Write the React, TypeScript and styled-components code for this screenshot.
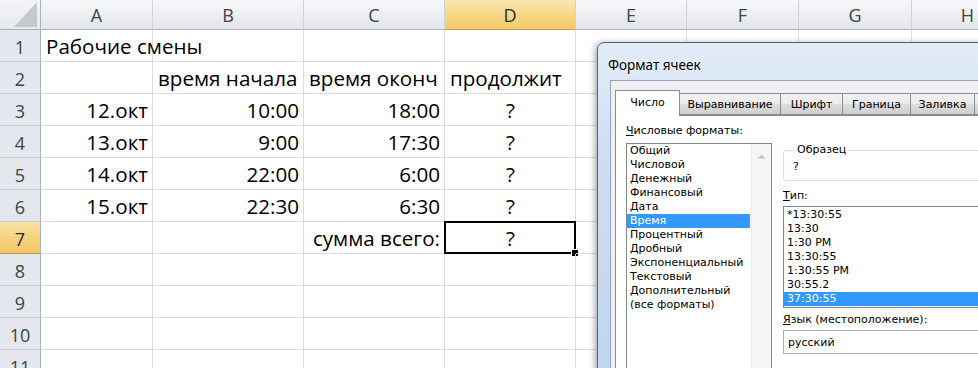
import React from "react";
import styled, { createGlobalStyle, css } from "styled-components";

const Global = createGlobalStyle`
  html, body { margin: 0; padding: 0; background: #fff; overflow: hidden; }
  body { width: 978px; height: 368px; }
  * { box-sizing: border-box; }
`;

const Page = styled.div`
  position: relative;
  width: 978px;
  height: 368px;
  overflow: hidden;
  font-family: "Open Sans", "Liberation Sans", sans-serif;
`;

const Sheet = styled.div`
  display: grid;
  grid-template-columns: 41px 112px 151px 141px 131px 111px 112px 113px 112px;
  grid-template-rows: 30px;
  grid-auto-rows: 32px;
`;

const Corner = styled.div`
  position: relative;
  background: linear-gradient(180deg, #f4f5f7, #e6e9ed);
  border-right: 1px solid #aab2bd;
  border-bottom: 1px solid #aab2bd;
  &::after {
    content: "";
    position: absolute;
    right: 3px;
    bottom: 2px;
    width: 23px;
    height: 25px;
    background: #c5c9ce;
    clip-path: polygon(100% 0, 100% 100%, 0 100%);
  }
`;

const ColHead = styled.div<{ $active?: boolean }>`
  display: flex;
  align-items: center;
  justify-content: center;
  font-size: 18px;
  color: #404346;
  background: linear-gradient(180deg, #f6f7f9 0%, #eceef1 55%, #e3e6ea 100%);
  border-right: 1px solid #cfd3d8;
  border-bottom: 1px solid #aab2bd;
  ${(p) =>
    p.$active &&
    css`
      background: linear-gradient(180deg, #fbe6b2 0%, #f8d88a 50%, #f3c968 100%);
      color: #2b2b2b;
      border-bottom-color: #c29b4e;
    `}
`;

const RowHead = styled.div<{ $active?: boolean }>`
  display: flex;
  align-items: center;
  justify-content: center;
  padding-top: 2px;
  font-size: 18px;
  color: #404346;
  background: #e4e8ee;
  border-right: 1px solid #aab2bd;
  border-bottom: 1px solid #c7ccd3;
  ${(p) =>
    p.$active &&
    css`
      background: linear-gradient(180deg, #fbe3a6 0%, #f6d27e 50%, #f2c666 100%);
      color: #2b2b2b;
      border-bottom-color: #c29b4e;
    `}
`;

const Cell = styled.div<{ $align?: "left" | "right" | "center"; $selected?: boolean }>`
  position: relative;
  display: flex;
  align-items: flex-end;
  padding: 0 4px 1px 5px;
  font-size: 20.6px;
  line-height: 27px;
  color: #000;
  white-space: nowrap;
  border-right: 1px solid #dadcdd;
  border-bottom: 1px solid #dadcdd;
  justify-content: ${(p) =>
    p.$align === "right" ? "flex-end" : p.$align === "center" ? "center" : "flex-start"};
  ${(p) =>
    p.$selected &&
    css`
      &::before {
        content: "";
        position: absolute;
        left: -1px;
        top: -1px;
        right: -1px;
        bottom: -1px;
        border: 2px solid #000;
        pointer-events: none;
      }
      &::after {
        content: "";
        position: absolute;
        right: -4px;
        bottom: -4px;
        width: 6px;
        height: 6px;
        background: #000;
        border: 1px solid #fff;
      }
    `}
`;

/* ---------- Dialog ---------- */

const Window = styled.div`
  position: absolute;
  left: 597px;
  top: 42px;
  width: 430px;
  height: 360px;
  border: 1px solid #51637c;
  border-radius: 7px 7px 0 0;
  background: linear-gradient(180deg, #e2ecf8 0%, #cfdff2 30%, #bed4ee 100%);
  box-shadow: -2px 1px 6px rgba(0, 0, 0, 0.35);
  padding-left: 12px;
  display: flex;
  flex-direction: column;
`;

const TitleBar = styled.div`
  height: 37px;
  display: flex;
  align-items: flex-end;
  padding-bottom: 6px;
  margin-left: -2px;
  font-family: "Noto Sans", "DejaVu Sans", sans-serif;
  font-size: 13.5px;
  color: #000;
  text-shadow: 0 0 6px #fff;
`;

const Client = styled.div`
  flex: 1;
  display: flex;
  flex-direction: column;
  background: #f0f0f0;
  border-left: 1px solid #8ea4c1;
  border-top: 1px solid #8ea4c1;
  padding: 9px 0 0 4px;
  font-family: "DejaVu Sans", "Liberation Sans", sans-serif;
  font-size: 11px;
  color: #000;
`;

const TabStrip = styled.div`
  display: flex;
  align-items: flex-start;
  height: 25px;
  position: relative;
  z-index: 1;
`;

const Tab = styled.div<{ $active?: boolean; $w: number }>`
  width: ${(p) => p.$w}px;
  flex: none;
  display: flex;
  align-items: center;
  justify-content: center;
  margin-top: 3px;
  height: 22px;
  border: 1px solid #898c95;
  border-left-width: 0;
  background: linear-gradient(180deg, #f2f2f2 0%, #ebebeb 50%, #dddddd 51%, #cfcfcf 100%);
  ${(p) =>
    p.$active &&
    css`
      margin-top: 0;
      height: 26px;
      border-left-width: 1px;
      border-bottom: none;
      background: #fff;
      padding-bottom: 2px;
    `}
`;

const Panel = styled.div`
  flex: 1;
  background: #fff;
  border: 1px solid #898c95;
  padding: 8px 10px;
  display: grid;
  grid-template-columns: 146px 1fr;
  column-gap: 11px;
  align-items: start;
`;

const Column = styled.div`
  display: flex;
  flex-direction: column;
`;

const Label = styled.div<{ $gap?: number }>`
  height: 14px;
  line-height: 14px;
  white-space: nowrap;
  margin-top: ${(p) => p.$gap ?? 0}px;
  u { text-decoration: underline; text-underline-offset: 1px; }
`;

const ListBox = styled.div<{ $h: number; $gap?: number }>`
  height: ${(p) => p.$h}px;
  margin-top: ${(p) => p.$gap ?? 0}px;
  border: 1px solid #828790;
  background: #fff;
  display: flex;
  overflow: hidden;
`;

const Items = styled.div<{ $pad?: number }>`
  flex: 1;
  padding: ${(p) => p.$pad ?? 0}px 1px 0 0;
`;

const Item = styled.div<{ $selected?: boolean }>`
  height: 14px;
  line-height: 14px;
  padding-left: 3px;
  white-space: nowrap;
  ${(p) =>
    p.$selected &&
    css`
      background: #3399ff;
      color: #fff;
    `}
`;

const ScrollBar = styled.div`
  width: 20px;
  flex: none;
  background: #f6f6f6;
  border-left: 1px solid #ececec;
  display: flex;
  justify-content: center;
  padding-top: 9px;
`;

const Group = styled.fieldset`
  margin: 19px 0 0 0;
  padding: 3px 10px 0 9px;
  height: 38px;
  border: 1px solid #d5dfe5;
  border-radius: 3px;
  min-width: 0;
  legend {
    padding: 0 2px;
    margin-left: 2px;
    line-height: 14px;
  }
`;

const Sample = styled.div`
  line-height: 14px;
`;

const Combo = styled.div`
  margin-top: 3px;
  height: 24px;
  border: 1px solid #abadb3;
  display: flex;
  align-items: center;
  padding-left: 4px;
`;

const cols = ["A", "B", "C", "D", "E", "F", "G", "H"];

type CellDef = { t?: string; a?: "left" | "right" | "center"; sel?: boolean };

const rows: CellDef[][] = [
  [{ t: "Рабочие смены" }],
  [{}, { t: "время начала" }, { t: "время оконч" }, { t: "продолжит" }],
  [{ t: "12.окт", a: "right" }, { t: "10:00", a: "right" }, { t: "18:00", a: "right" }, { t: "?", a: "center" }],
  [{ t: "13.окт", a: "right" }, { t: "9:00", a: "right" }, { t: "17:30", a: "right" }, { t: "?", a: "center" }],
  [{ t: "14.окт", a: "right" }, { t: "22:00", a: "right" }, { t: "6:00", a: "right" }, { t: "?", a: "center" }],
  [{ t: "15.окт", a: "right" }, { t: "22:30", a: "right" }, { t: "6:30", a: "right" }, { t: "?", a: "center" }],
  [{}, {}, { t: "сумма всего:", a: "right" }, { t: "?", a: "center", sel: true }],
  [],
  [],
  [],
  [],
];

const formats = [
  "Общий",
  "Числовой",
  "Денежный",
  "Финансовый",
  "Дата",
  "Время",
  "Процентный",
  "Дробный",
  "Экспоненциальный",
  "Текстовый",
  "Дополнительный",
  "(все форматы)",
];

const types = ["*13:30:55", "13:30", "1:30 PM", "13:30:55", "1:30:55 PM", "30:55.2", "37:30:55"];

const tabs: { t: string; w: number }[] = [
  { t: "Число", w: 65 },
  { t: "Выравнивание", w: 101 },
  { t: "Шрифт", w: 62 },
  { t: "Граница", w: 68 },
  { t: "Заливка", w: 64 },
  { t: "Защита", w: 64 },
];

export default function App() {
  return (
    <Page>
      <Global />
      <Sheet>
        <Corner />
        {cols.map((c) => (
          <ColHead key={c} $active={c === "D"}>
            {c}
          </ColHead>
        ))}
        {rows.map((r, ri) => (
          <React.Fragment key={ri}>
            <RowHead $active={ri === 6}>{ri + 1}</RowHead>
            {cols.map((c, ci) => {
              const d = r[ci] || {};
              return (
                <Cell key={c} $align={d.a} $selected={d.sel}>
                  {d.t}
                </Cell>
              );
            })}
          </React.Fragment>
        ))}
      </Sheet>

      <Window>
        <TitleBar>Формат ячеек</TitleBar>
        <Client>
          <TabStrip>
            {tabs.map((tb, i) => (
              <Tab key={tb.t} $w={tb.w} $active={i === 0}>
                {tb.t}
              </Tab>
            ))}
          </TabStrip>
          <Panel>
            <Column>
              <Label>
                <u>Ч</u>исловые форматы:
              </Label>
              <ListBox $h={240} $gap={5}>
                <Items>
                  {formats.map((f) => (
                    <Item key={f} $selected={f === "Время"}>
                      {f}
                    </Item>
                  ))}
                </Items>
                <ScrollBar>
                  <svg width="9" height="6" viewBox="0 0 9 6">
                    <path d="M0.5 5.5 L4.5 1.5 L8.5 5.5 Z" fill="#c4c4c4" />
                  </svg>
                </ScrollBar>
              </ListBox>
            </Column>
            <Column>
              <Group>
                <legend>Образец</legend>
                <Sample>?</Sample>
              </Group>
              <Label $gap={8}>
                <u>Т</u>ип:
              </Label>
              <ListBox $h={102} $gap={3}>
                <Items $pad={1}>
                  {types.map((t, i) => (
                    <Item key={i} $selected={i === types.length - 1}>
                      {t}
                    </Item>
                  ))}
                </Items>
              </ListBox>
              <Label $gap={5}>
                <u>Я</u>зык (местоположение):
              </Label>
              <Combo>русский</Combo>
            </Column>
          </Panel>
        </Client>
      </Window>
    </Page>
  );
}
